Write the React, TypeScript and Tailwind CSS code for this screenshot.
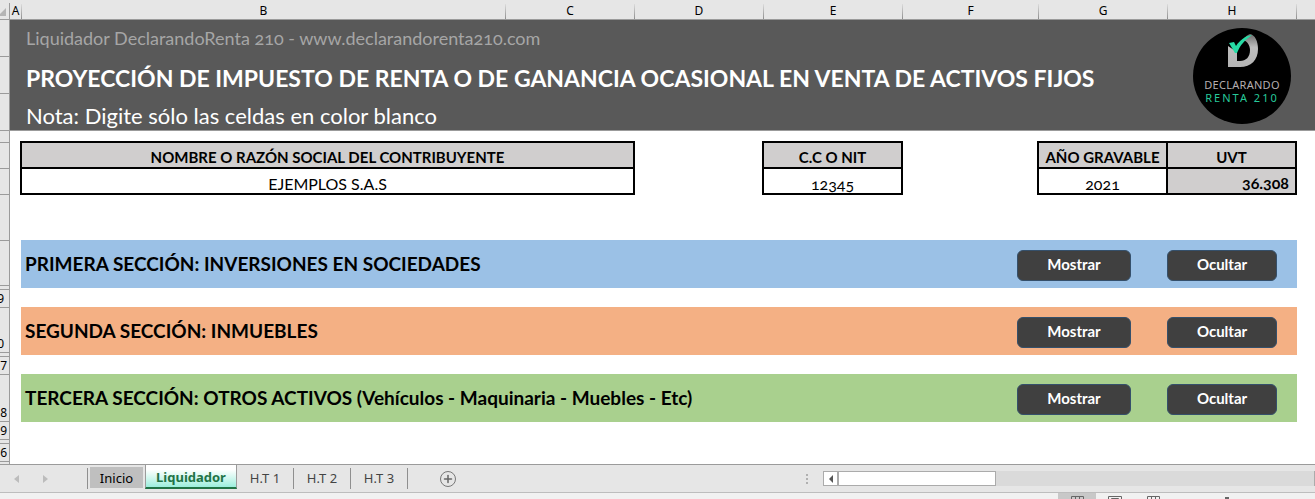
import { useState } from 'react';
import { Plus } from 'lucide-react';
import { clsx } from 'clsx';

const GRID_COLS = 'grid-cols-[12px_1fr_129px_129px_139px_136px_129px_129px_18px]';

const COLUMNS = ['A', 'B', 'C', 'D', 'E', 'F', 'G', 'H', ''];

const ROWS: { label: string; height: string; pad?: string }[] = [
  { label: '', height: 'h-[37px]' },
  { label: '', height: 'h-[37px]' },
  { label: '', height: 'h-[37px]' },
  { label: '', height: 'h-[12px]' },
  { label: '', height: 'h-[26px]' },
  { label: '', height: 'h-[26px]' },
  { label: '', height: 'h-[46px]' },
  { label: '', height: 'h-[45px]' },
  { label: '', height: 'h-[4px]' },
  { label: '9', height: 'h-[18px]', pad: 'pr-[5px]' },
  { label: '0', height: 'h-[45px]', pad: 'pr-[5px]' },
  { label: '', height: 'h-[4px]' },
  { label: '27', height: 'h-[18px]', pad: 'pr-[2px]' },
  { label: '28', height: 'h-[47px]', pad: 'pr-[2px]' },
  { label: '29', height: 'h-[18px]', pad: 'pr-[2px]' },
  { label: '', height: 'h-[4px]' },
  { label: '36', height: 'h-[18px]', pad: 'pr-[2px]' },
];

const SECTIONS = [
  { id: 'sociedades', title: 'PRIMERA SECCIÓN: INVERSIONES EN SOCIEDADES', color: 'bg-[#9bc1e6]' },
  { id: 'inmuebles', title: 'SEGUNDA SECCIÓN: INMUEBLES', color: 'bg-[#f4b084]' },
  { id: 'otros', title: 'TERCERA SECCIÓN: OTROS ACTIVOS (Vehículos - Maquinaria - Muebles - Etc)', color: 'bg-[#a9d08e]' },
];

const SHEETS = ['Inicio', 'Liquidador', 'H.T 1', 'H.T 2', 'H.T 3'];

const HEAD_CELL = 'h-[26px] border-2 border-black bg-[#d0cece] p-0 pt-1 text-[15px] font-bold leading-5';
const BODY_CELL = 'h-[26px] border-2 border-black p-0';
const CELL_INPUT = 'block h-6 w-full bg-white pt-1 text-center text-base leading-5 outline-none';

function ColumnHeaders() {
  return (
    <div className="flex h-5 border-b border-[#9b9b9b] bg-[#e6e6e6]">
      <div className="flex w-[10px] shrink-0 items-end">
        <svg viewBox="0 0 10 19" className="h-[19px] w-[10px]">
          <path d="M6 8v8H-2z" fill="#b4b4b4" />
          <path d="M9.5 3v16" stroke="#9b9b9b" />
        </svg>
      </div>
      <div className={clsx('grid flex-1', GRID_COLS)}>
        {COLUMNS.map((name, i) => (
          <div key={i} className="flex">
            <span className="flex-1 pt-[3px] text-center font-['Noto_Sans'] text-xs leading-4 text-black">{name}</span>
            {name && <span className="mt-1 w-px bg-linear-to-b from-[#dcdcdc] to-[#8f8f8f]" />}
          </div>
        ))}
      </div>
    </div>
  );
}

function RowHeaders() {
  return (
    <div className="flex w-[10px] shrink-0 flex-col border-r border-[#9b9b9b] bg-[#e6e6e6] pb-0.5">
      {ROWS.map((row, i) => (
        <div
          key={i}
          className={clsx(
            "flex shrink-0 items-end justify-end overflow-hidden border-b border-[#9b9b9b] font-['Noto_Sans'] text-xs leading-4 text-black lining-nums",
            row.height,
            row.pad
          )}
        >
          {row.label}
        </div>
      ))}
    </div>
  );
}

function Logo() {
  return (
    <div className="flex h-24 w-[98px] shrink-0 flex-col items-center rounded-[50%] bg-black pt-1.5 font-['Noto_Sans'] lining-nums">
      <svg viewBox="0 0 32 34" className="h-[34px] w-8">
        <defs>
          <linearGradient id="dShade" x1="0" y1="0" x2="0" y2="1">
            <stop offset="0" stopColor="#6b6b6b" />
            <stop offset="0.4" stopColor="#bdbdbd" />
            <stop offset="1" stopColor="#b4b4b4" />
          </linearGradient>
        </defs>
        <path
          d="M2 12v21h12c11 0 18-7 18-18C32 7 29 1 24 0c-3 1-5 3-7 6 4 1 7 5 7 10 0 7-4 11-10 11h-3V18z"
          fill="url(#dShade)"
        />
        <path d="M3 9l5-1 2 4C14 6 19 2 26 1c-7 5-12 10-15 18H9z" fill="#27dba5" />
      </svg>
      <div className="mt-2.5 text-[11px] leading-[13px] tracking-wide text-[#b5aeb0]">DECLARANDO</div>
      <div className="text-[11px] leading-[14px] tracking-[2px] text-[#27c99a]">RENTA 210</div>
    </div>
  );
}

function Banner() {
  return (
    <header className="flex h-[111px] items-start justify-between border-b border-[#9b9b9b] bg-[#595959] pt-1.5 pr-6 pl-4">
      <div className="whitespace-nowrap">
        <p className="text-lg leading-6 text-[#a6a6a6]">Liquidador DeclarandoRenta 210 - www.declarandorenta210.com</p>
        <h1 className="mt-3 text-[23px] font-bold leading-8 text-white">
          PROYECCIÓN DE IMPUESTO DE RENTA O DE GANANCIA OCASIONAL EN VENTA DE ACTIVOS FIJOS
        </h1>
        <p className="mt-2 text-[22px] leading-7 text-white">Nota: Digite sólo las celdas en color blanco</p>
      </div>
      <div className="pt-0.5">
        <Logo />
      </div>
    </header>
  );
}

function Taxpayer() {
  const [name, setName] = useState('EJEMPLOS S.A.S');
  const [nit, setNit] = useState('12345');
  const [year, setYear] = useState('2021');

  return (
    <div className="flex pt-[10px] pr-[18px] pl-[10px]">
      <table className="flex-1 table-fixed border-collapse">
        <thead>
          <tr><th id="h-name" className={HEAD_CELL}>NOMBRE O RAZÓN SOCIAL DEL CONTRIBUYENTE</th></tr>
        </thead>
        <tbody>
          <tr>
            <td className={BODY_CELL}>
              <input aria-labelledby="h-name" className={CELL_INPUT} value={name} onChange={e => setName(e.target.value)} />
            </td>
          </tr>
        </tbody>
      </table>
      <table className="ml-[127px] w-[141px] table-fixed border-collapse">
        <thead>
          <tr><th id="h-nit" className={HEAD_CELL}>C.C O NIT</th></tr>
        </thead>
        <tbody>
          <tr>
            <td className={BODY_CELL}>
              <input aria-labelledby="h-nit" className={CELL_INPUT} value={nit} onChange={e => setNit(e.target.value)} />
            </td>
          </tr>
        </tbody>
      </table>
      <table className="ml-[134px] w-[260px] table-fixed border-collapse">
        <thead>
          <tr>
            <th id="h-year" className={HEAD_CELL}>AÑO GRAVABLE</th>
            <th className={HEAD_CELL}>UVT</th>
          </tr>
        </thead>
        <tbody>
          <tr>
            <td className={BODY_CELL}>
              <input aria-labelledby="h-year" className={CELL_INPUT} value={year} onChange={e => setYear(e.target.value)} />
            </td>
            <td className="h-[26px] border-2 border-black bg-[#d0cece] p-0 pt-1 pr-1.5 text-right text-base font-bold leading-5">36.308</td>
          </tr>
        </tbody>
      </table>
    </div>
  );
}

function SheetButton({ children, width }: { children: string; width: string }) {
  return (
    <button
      className={clsx(
        'h-[31px] rounded-md border border-[#35506b] bg-[#404040] pb-0.5 text-[15px] font-bold leading-5 text-white',
        width
      )}
    >
      {children}
    </button>
  );
}

function SheetTabs() {
  const [active, setActive] = useState('Liquidador');

  return (
    <nav className="flex h-[29px] shrink-0 border-t border-b border-t-[#9b9b9b] border-b-[#bdbdbd] bg-[#e6e6e6] font-['Noto_Sans'] text-[13px] lining-nums">
      <div className="flex w-[87px] items-center gap-6 pl-3.5">
        <svg viewBox="0 0 5 8" className="h-2 w-[5px]"><path d="M5 0v8L0 4z" fill="#bcbcbc" /></svg>
        <svg viewBox="0 0 5 8" className="h-2 w-[5px]"><path d="M0 0v8l5-4z" fill="#bcbcbc" /></svg>
      </div>
      <span className="my-[3px] mr-0.5 w-px bg-[#8f8f8f]" />
      {SHEETS.map(sheet => {
        const isActive = sheet === active;
        return (
          <button
            key={sheet}
            onClick={() => setActive(sheet)}
            className={clsx(
              'leading-5',
              isActive && 'h-6 w-[92px] border-x border-b-2 border-x-[#9b9b9b] border-b-[#217346] bg-linear-to-b from-white from-20% to-[#9beedd] pt-0.5 font-bold text-[#217346]',
              !isActive && sheet === 'Inicio' && 'mt-0.5 mr-0.5 mb-1 w-[53px] bg-[#bfbfbf] text-black',
              !isActive && sheet !== 'Inicio' && 'my-[3px] w-[57px] border-r border-[#8f8f8f] pb-0.5 text-[#444]'
            )}
          >
            {sheet}
          </button>
        );
      })}
      <button aria-label="Nueva hoja" className="ml-8 flex size-4 items-center justify-center self-center rounded-full border border-[#777] text-[#666]">
        <Plus size={12} strokeWidth={3} />
      </button>
      <div className="ml-auto flex items-center">
        <svg viewBox="0 0 2 10" className="mr-[15px] h-[10px] w-0.5">
          <path d="M0 0h2v2H0zM0 4h2v2H0zM0 8h2v2H0z" fill="#b0b0b0" />
        </svg>
        <button aria-label="Desplazar a la izquierda" className="flex h-[15px] w-[15px] items-center justify-center border border-[#ababab] bg-white">
          <svg viewBox="0 0 4 8" className="h-2 w-1"><path d="M4 0v8L0 4z" fill="#555" /></svg>
        </button>
        <div className="h-[15px] w-[477px] border-r border-[#ababab] bg-[#dadada]">
          <div className="h-full w-[158px] border border-[#ababab] bg-white" />
        </div>
      </div>
    </nav>
  );
}

function StatusBar() {
  return (
    <footer className="flex h-6 shrink-0 justify-end bg-[#f1f1f1] pr-[86px]">
      <button aria-label="Normal" className="flex h-full w-[38px] justify-center bg-[#c8c8c8] pt-[3px]">
        <svg viewBox="0 0 13 11" className="h-[11px] w-[13px]" fill="none" stroke="#666">
          <path d="M.5 .5h12v10H.5zM4.5 .5v10M8.5 .5v10M.5 4h12M.5 7h12" />
        </svg>
      </button>
      <button aria-label="Diseño de página" className="flex w-[38px] justify-center pt-[3px]">
        <svg viewBox="0 0 14 11" className="h-[11px] w-[14px]" fill="none" stroke="#666">
          <path d="M.5 .5h13v10H.5zM3.5 2.5h7v6h-7z" />
        </svg>
      </button>
      <button aria-label="Salto de página" className="flex w-[38px] justify-center pt-[3px]">
        <svg viewBox="0 0 13 11" className="h-[11px] w-[13px]" fill="none" stroke="#666">
          <path d="M.5 .5h12v10H.5zM4.5 .5v5M8.5 .5v5M.5 5.5h12" />
        </svg>
      </button>
      <span className="mt-1 ml-[53px] h-3 w-1 bg-[#666]" />
    </footer>
  );
}

export default function App() {
  return (
    <div className="flex h-screen flex-col overflow-hidden bg-white font-['Lato',sans-serif] text-black oldstyle-nums">
      <ColumnHeaders />
      <div className="flex flex-1">
        <RowHeaders />
        <main className="flex-1">
          <Banner />
          <Taxpayer />
          <div className="mt-[45px] mr-[18px] ml-[11px] flex flex-col gap-[19px]">
            {SECTIONS.map(section => (
              <section key={section.id} className={clsx('flex h-12 items-center pt-0.5 pr-5 pl-1', section.color)}>
                <h2 className="flex-1 whitespace-nowrap pb-0.5 text-[19px] font-bold leading-6">{section.title}</h2>
                <SheetButton width="w-[114px]">Mostrar</SheetButton>
                <span className="w-9" />
                <SheetButton width="w-[110px]">Ocultar</SheetButton>
              </section>
            ))}
          </div>
        </main>
      </div>
      <SheetTabs />
      <StatusBar />
    </div>
  );
}
